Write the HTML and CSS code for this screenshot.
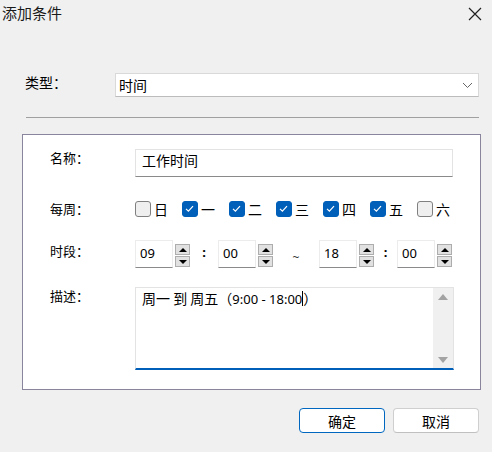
FILE: index.html
```html
<!DOCTYPE html>
<html lang="zh-CN">
  <head>
    <meta charset="UTF-8" />
    <title>添加条件</title>
    <link rel="stylesheet" href="styles.css">
  </head>
  <body>
    <div class="titlebar">
      <span class="title">添加条件</span>
      <svg class="close" width="14" height="14" viewBox="0 0 14 14">
        <path d="M1 1 L13 13 M13 1 L1 13" stroke="#222" stroke-width="1.2" fill="none" />
      </svg>
    </div>

    <div class="type-row">
      <span class="type-label">类型：</span>
      <div class="combo">
        <span>时间</span>
        <svg width="11" height="7" viewBox="0 0 11 7">
          <path d="M1 1 L5.5 5.5 L10 1" stroke="#666" stroke-width="1" fill="none" />
        </svg>
      </div>
    </div>

    <div class="divider"></div>

    <div class="panel">
      <div class="row row-name">
        <span class="label">名称：</span>
        <div class="edit">工作时间</div>
      </div>

      <div class="row row-week">
        <span class="label">每周：</span>
        <div class="days">
          <label class="day"><span class="box"></span>日</label>
          <label class="day"><span class="box checked"><svg width="15" height="15" viewBox="0 0 15 15"><path d="M4 7.8 L6.4 10.2 L11 5.2" stroke="#fff" stroke-width="1.2" fill="none" /></svg></span>一</label>
          <label class="day"><span class="box checked"><svg width="15" height="15" viewBox="0 0 15 15"><path d="M4 7.8 L6.4 10.2 L11 5.2" stroke="#fff" stroke-width="1.2" fill="none" /></svg></span>二</label>
          <label class="day"><span class="box checked"><svg width="15" height="15" viewBox="0 0 15 15"><path d="M4 7.8 L6.4 10.2 L11 5.2" stroke="#fff" stroke-width="1.2" fill="none" /></svg></span>三</label>
          <label class="day"><span class="box checked"><svg width="15" height="15" viewBox="0 0 15 15"><path d="M4 7.8 L6.4 10.2 L11 5.2" stroke="#fff" stroke-width="1.2" fill="none" /></svg></span>四</label>
          <label class="day"><span class="box checked"><svg width="15" height="15" viewBox="0 0 15 15"><path d="M4 7.8 L6.4 10.2 L11 5.2" stroke="#fff" stroke-width="1.2" fill="none" /></svg></span>五</label>
          <label class="day"><span class="box"></span>六</label>
        </div>
      </div>

      <div class="row row-time">
        <span class="label">时段：</span>
        <div class="times">
          <div class="spin">
            <div class="spin-edit">09</div>
            <div class="spin-btns">
              <span class="spin-btn"><i class="up"></i></span>
              <span class="spin-btn"><i class="down"></i></span>
            </div>
          </div>
          <span class="sep">:</span>
          <div class="spin">
            <div class="spin-edit">00</div>
            <div class="spin-btns">
              <span class="spin-btn"><i class="up"></i></span>
              <span class="spin-btn"><i class="down"></i></span>
            </div>
          </div>
          <span class="sep tilde">~</span>
          <div class="spin">
            <div class="spin-edit">18</div>
            <div class="spin-btns">
              <span class="spin-btn"><i class="up"></i></span>
              <span class="spin-btn"><i class="down"></i></span>
            </div>
          </div>
          <span class="sep sep-narrow">:</span>
          <div class="spin">
            <div class="spin-edit">00</div>
            <div class="spin-btns">
              <span class="spin-btn"><i class="up"></i></span>
              <span class="spin-btn"><i class="down"></i></span>
            </div>
          </div>
        </div>
      </div>

      <div class="row row-desc">
        <span class="label">描述：</span>
        <div class="memo">
          <div class="memo-text">周一 到 周五（<span class="num">9:00 - 18:00</span><span class="caret"></span>）</div>
          <div class="scroll">
            <i class="s-up"></i>
            <i class="s-down"></i>
          </div>
        </div>
      </div>
    </div>

    <div class="buttons">
      <button class="btn btn-ok">确定</button>
      <button class="btn">取消</button>
    </div>
  </body>
</html>
```

FILE: styles.css
```css
html {
  margin: 0;
  padding: 0;
}
body {
  margin: 0;
  width: 492px;
  height: 452px;
  background: #f0f0f0;
  color: #000;
  font-family: "Noto Sans CJK SC", "Noto Sans", sans-serif;
  font-size: 13px;
  overflow: hidden;
}
/* 标题栏 */
.titlebar {
  height: 28px;
  display: flex;
  justify-content: space-between;
  align-items: flex-start;
}
.title {
  margin: 3px 0 0 2px;
  font-size: 15px;
  line-height: 20px;
  color: #1a1a1a;
}
.close {
  margin: 7px 10px 0 0;
}
/* 类型 */
.type-row {
  margin-top: 45px;
  display: flex;
  align-items: center;
  padding-left: 25px;
}
.type-label {
  width: 90px;
  font-size: 14px;
  line-height: 20px;
  margin-top: -6px;
}
.combo {
  box-sizing: border-box;
  width: 364px;
  height: 24px;
  background: #fff;
  border: 1px solid #d9d9d9;
  border-bottom-color: #bcbcbc;
  display: flex;
  align-items: center;
  justify-content: space-between;
  padding: 0 5px 0 3px;
  font-size: 14px;
}
.divider {
  margin: 20px 13px 0 26px;
  height: 1px;
  background: #a0a0a0;
}
/* 面板 */
.panel {
  box-sizing: border-box;
  margin: 16px 0 0 22px;
  width: 459px;
  height: 256px;
  background: #fff;
  border: 1px solid #8a859c;
  padding: 14px 0 0 27px;
}
.row {
  display: flex;
  align-items: flex-start;
}
.label {
  width: 85px;
  line-height: 18px;
  font-size: 13px;
  flex-shrink: 0;
}
.edit {
  box-sizing: border-box;
  width: 318px;
  height: 28px;
  border: 1px solid #e3e3e3;
  border-bottom-color: #8a8a8a;
  padding: 0 0 0 6px;
  font-size: 14px;
  line-height: 20px;
}
.row-week {
  margin-top: 24px;
}
.row-week .label {
  margin-top: -1px;
}
.days {
  display: flex;
  height: 16px;
  align-items: center;
}
.day {
  width: 47px;
  display: flex;
  align-items: center;
  font-size: 14px;
  line-height: 16px;
}
.day:last-child {
  width: auto;
}
.box {
  box-sizing: border-box;
  width: 16px;
  height: 16px;
  border: 1px solid #808080;
  border-radius: 3px;
  background: #efefef;
  margin-right: 3px;
  display: inline-flex;
}
.box.checked {
  background: #005fb8;
  border-color: #005fb8;
}
.box.checked svg {
  margin: -1px 0 0 -1px;
}
/* 时段 */
.row-time {
  margin-top: 22px;
}
.row-time .label {
  margin-top: 2px;
}
.times {
  display: flex;
  align-items: flex-start;
  height: 28px;
}
.spin {
  display: flex;
  align-items: flex-start;
}
.spin-edit {
  box-sizing: border-box;
  width: 38px;
  height: 28px;
  border: 1px solid #ececec;
  border-bottom-color: #8a8a8a;
  padding: 0 0 0 4px;
  font-family: "Noto Sans", "Liberation Sans", sans-serif;
  font-size: 13px;
  line-height: 24px;
}
.spin-btns {
  margin: 4px 0 0 2px;
  display: flex;
  flex-direction: column;
  gap: 1px;
}
.spin-btn {
  box-sizing: border-box;
  width: 15px;
  height: 11px;
  background: #e1e1e1;
  border: 1px solid #adadad;
  display: flex;
  align-items: center;
  justify-content: center;
}
.up,
.down {
  width: 0;
  height: 0;
  border-left: 4px solid transparent;
  border-right: 4px solid transparent;
}
.up {
  border-bottom: 4px solid #000;
}
.down {
  border-top: 4px solid #000;
}
.sep {
  width: 28px;
  text-align: center;
  font-family: "Noto Sans", sans-serif;
  font-weight: bold;
  font-size: 13px;
  line-height: 24px;
}
.sep-narrow {
  width: 23px;
}
.sep.tilde {
  width: 46px;
  font-weight: normal;
  font-size: 12px;
  line-height: 24px;
  padding-top: 6px;
  color: #333;
}
/* 描述 */
.row-desc {
  margin-top: 19px;
}
.memo {
  box-sizing: border-box;
  width: 319px;
  height: 83px;
  border: 1px solid #e3e3e3;
  border-bottom: 2px solid #005fb8;
  display: flex;
  justify-content: space-between;
}
.memo-text {
  padding: 0 0 0 6px;
  font-size: 14px;
  line-height: 20px;
}
.num {
  font-family: "Noto Sans", sans-serif;
  font-size: 13px;
}
.caret {
  display: inline-block;
  width: 1px;
  height: 15px;
  background: #000;
  vertical-align: -2px;
}
.scroll {
  width: 20px;
  background: #f0f0f0;
  display: flex;
  flex-direction: column;
  justify-content: space-between;
  align-items: center;
  padding: 6px 0 5px;
}
.s-up,
.s-down {
  width: 0;
  height: 0;
  border-left: 5px solid transparent;
  border-right: 5px solid transparent;
}
.s-up {
  border-bottom: 6px solid #a3a3a3;
}
.s-down {
  border-top: 6px solid #a3a3a3;
}
/* 按钮 */
.buttons {
  margin: 18px 13px 0 0;
  display: flex;
  justify-content: flex-end;
  gap: 8px;
}
.btn {
  box-sizing: border-box;
  width: 86px;
  height: 25px;
  background: #fff;
  border: 1px solid #cfcfcf;
  border-bottom-color: #c0c0c0;
  border-radius: 4px;
  font-family: "Noto Sans CJK SC", sans-serif;
  font-size: 14px;
  line-height: 20px;
  padding: 0;
  color: #000;
}
.btn-ok {
  border: 1px solid #0067c0;
}
```
